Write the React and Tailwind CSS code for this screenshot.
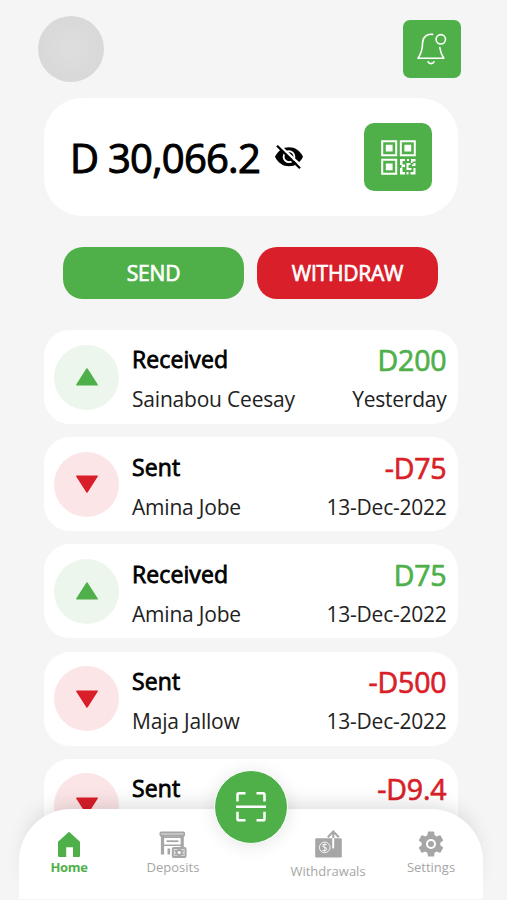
import React from 'react'

const transactions = [
    { id: 1, type: 'Received', name: 'Sainabou Ceesay', amount: 'D200', date: 'Yesterday' },
    { id: 2, type: 'Sent', name: 'Amina Jobe', amount: '-D75', date: '13-Dec-2022' },
    { id: 3, type: 'Received', name: 'Amina Jobe', amount: 'D75', date: '13-Dec-2022' },
    { id: 4, type: 'Sent', name: 'Maja Jallow', amount: '-D500', date: '13-Dec-2022' },
    { id: 5, type: 'Sent', name: 'Maja Jallow', amount: '-D9.4', date: '13-Dec-2022' },
]

const BellIcon = () => (
    <svg width="30" height="34" viewBox="0 0 30 34" fill="none" stroke="white" strokeWidth="1.6" strokeLinecap="round" strokeLinejoin="round">
        <path d="M15.6 2.4C10 1.4 5.8 5 5.6 10.5C5.5 17 4.8 21 1 26.3H26.8C24.4 22.5 23.2 19.5 22.8 15.5" />
        <circle cx="23.8" cy="7.3" r="4.7" />
        <path d="M11 29.8C12 32.2 16 32.2 17 29.8" />
    </svg>
)

const HiddenIcon = () => (
    <svg width="30" height="26" viewBox="0 0 30 26" fill="none">
        <path d="M1 12.7C4 6.5 9 3.2 15 3.2S26 6.5 29 12.7C26 18.9 21 22.2 15 22.2S4 18.9 1 12.7Z" fill="black" />
        <circle cx="15" cy="12.7" r="5.4" stroke="white" strokeWidth="1.9" />
        <circle cx="15" cy="12.7" r="3.3" fill="black" />
        <path d="M4.5 0.5L28 22.5" stroke="white" strokeWidth="2.4" />
        <path d="M3 1.8L26 24.2" stroke="black" strokeWidth="2.3" />
    </svg>
)

const QrIcon = () => (
    <svg width="35" height="35" viewBox="0 0 35 35" fill="none">
        <g stroke="white" strokeWidth="2">
            <path d="M1.2 1.2H15.2V15.2H1.2ZM19.8 1.2H33.8V15.2H19.8ZM1.2 19.8H15.2V33.8H1.2Z" />
        </g>
        <path d="M4.8 4.8H11.6V11.6H4.8ZM23.4 4.8H30.2V11.6H23.4ZM4.8 23.4H11.6V30.2H4.8Z" fill="white" />
        <path d="M19 19H24V21H21.5V24.5H24V27H21.5V32H24V34.5H19V28H20.5V25H19ZM26 19H28V21H26ZM30 19H34.5V21.5H31.5V23H30ZM25.5 23H29.5V25H27.5V28H30.5V30H25.5ZM32.5 23H34.5V26H31V24.5H32.5ZM32.5 28H34.5V34.5H29.5V32H32.5ZM25.5 32H27.5V34.5H25.5Z" fill="white" />
    </svg>
)

const ScanIcon = () => (
    <svg width="32" height="32" viewBox="0 0 32 32" fill="none" stroke="white" strokeWidth="2.5" strokeLinejoin="round">
        <path d="M2.5 10.5V3.5Q2.5 2.2 3.8 2.2H10.5M21.5 2.2H28.2Q29.5 2.2 29.5 3.5V10.5M29.5 20.8V28Q29.5 29.3 28.2 29.3H21.5M10.5 29.3H3.8Q2.5 29.3 2.5 28V20.8M1 15.7H31" />
    </svg>
)

const HomeIcon = () => (
    <svg width="24" height="27" viewBox="0 0 24 27" fill="#4fb04a">
        <path d="M12 0.8L23 10.8V24.8Q23 26 21.8 26H16V16.2H9.2V26H2.2Q1 26 1 24.8V10.8Z" />
    </svg>
)

const DepositIcon = () => (
    <svg width="28" height="27" viewBox="0 0 28 27" fill="none" stroke="#a6a6a6">
        <rect x="1.3" y="1.3" width="24" height="3.6" rx="1" strokeWidth="1.6" fill="#c4c4c4" />
        <path d="M3.5 5V23.5M23.2 5V16.5" strokeWidth="3.2" />
        <path d="M5 6.3H23M5 14.2H23" strokeWidth="1.6" />
        <path d="M7.5 10.2H19.5" strokeWidth="1.8" />
        <path d="M9.8 17.5V23.5" strokeWidth="2.6" />
        <rect x="13.8" y="17" width="12.8" height="9" rx="1" strokeWidth="1.9" fill="#dedede" />
        <circle cx="20.2" cy="21.5" r="2.6" strokeWidth="2" fill="white" />
        <path d="M16.3 19V20.4M24.1 19V20.4M16.3 22.8V24.2M24.1 22.8V24.2" strokeWidth="1.4" />
    </svg>
)

const WithdrawIcon = () => (
    <svg width="27" height="28" viewBox="0 0 27 28" fill="none">
        <rect x="0.2" y="8.2" width="26.6" height="19.4" rx="1.4" fill="#a6a6a6" />
        <path d="M18.3 18V3M12.8 7.2L18.3 1.5L23.8 7.2" stroke="#a6a6a6" strokeWidth="2" />
        <path d="M18.2 8V18.4" stroke="white" strokeWidth="2" />
        <circle cx="9.7" cy="17.4" r="5.3" stroke="white" strokeWidth="0.9" />
        <text x="9.7" y="20.9" fill="white" fontSize="10" textAnchor="middle" fontFamily="Open Sans">$</text>
    </svg>
)

const SettingsIcon = () => (
    <svg width="26" height="26" viewBox="2 2 20 20" fill="#a6a6a6">
        <path d="M19.14 12.94c.04-.3.06-.61.06-.94 0-.32-.02-.64-.07-.94l2.03-1.58c.18-.14.23-.41.12-.61l-1.92-3.32c-.12-.22-.37-.29-.59-.22l-2.39.96c-.5-.38-1.03-.7-1.62-.94l-.36-2.54c-.04-.24-.24-.41-.48-.41h-3.84c-.24 0-.43.17-.47.41l-.36 2.54c-.59.24-1.13.57-1.62.94l-2.39-.96c-.22-.08-.47 0-.59.22L2.74 8.87c-.12.21-.08.47.12.61l2.03 1.58c-.05.3-.09.63-.09.94s.02.64.07.94l-2.03 1.58c-.18.14-.23.41-.12.61l1.92 3.32c.12.22.37.29.59.22l2.39-.96c.5.38 1.03.7 1.62.94l.36 2.54c.05.24.24.41.48.41h3.84c.24 0 .44-.17.47-.41l.36-2.54c.59-.24 1.13-.56 1.62-.94l2.39.96c.22.08.47 0 .59-.22l1.92-3.32c.12-.22.07-.47-.12-.61l-2.01-1.58z" />
        <circle cx="12" cy="12" r="3.1" fill="#a6a6a6" stroke="white" strokeWidth="1.5" />
    </svg>
)

const TransactionCard = ({ type, name, amount, date }) => {
    const received = type === 'Received'

    return (
        <div className="flex h-[94px] shrink-0 items-start rounded-[26px] bg-white pl-[10px] pr-[11.5px]">
            <div className={`mt-[14.5px] flex size-[65px] shrink-0 items-center justify-center rounded-full ${received ? 'bg-[#edf6ed]' : 'bg-[#fce5e7]'}`}>
                <svg width="22" height="18" viewBox="0 0 22 18" strokeWidth="1.4" strokeLinejoin="round">
                    {received
                        ? <path d="M11 1L21.2 16.8H0.8Z" fill="#4fb04a" stroke="#4fb04a" />
                        : <path d="M11 17L21.2 1.2H0.8Z" fill="#d91f29" stroke="#d91f29" />}
                </svg>
            </div>
            <div className="ml-[13px] flex flex-1 flex-col pt-[13.4px]">
                <span className="text-[23px] leading-[32px] tracking-[0.1px] text-black [-webkit-text-stroke:0.8px_black]">{type}</span>
                <span className="mt-[9px] text-[21px] leading-[30px] tracking-[-0.2px] text-[#222]">{name}</span>
            </div>
            <div className="flex flex-col items-end pt-[13.4px]">
                <span className={`text-[28.5px] leading-[35px] tracking-[-0.15px] ${received ? 'text-[#4fb04a] [-webkit-text-stroke:0.7px_#4fb04a]' : 'text-[#d91f29] [-webkit-text-stroke:0.7px_#d91f29]'}`}>{amount}</span>
                <span className="mt-[6px] text-[21px] leading-[30px] tracking-[-0.25px] text-[#222]">{date}</span>
            </div>
        </div>
    )
}

const NavItem = ({ label, active, className, children }) => (
    <button className={`flex flex-col items-center text-[13px] leading-[18px] ${active ? 'font-bold tracking-[-0.3px] text-[#4fb04a]' : 'text-[#a6a6a6]'} ${className}`}>
        {children}
        <span>{label}</span>
    </button>
)

const App = () => {
    return (
        <div className="relative flex h-[900px] w-[507px] flex-col overflow-hidden bg-[#f5f5f5] font-['Open_Sans',sans-serif]">
            {/* Header */}
            <div className="flex justify-between pl-[38px] pr-[46px] pt-4">
                <div className="size-[66px] rounded-full bg-radial from-[#dedede] to-[#d6d6d6]" />
                <button className="mt-1 flex size-[58px] items-center justify-center rounded-[7px] bg-[#4fb04a]">
                    <BellIcon />
                </button>
            </div>

            {/* Balance */}
            <div className="ml-[44px] mt-4 flex h-[118px] w-[414px] shrink-0 items-center rounded-[38px] bg-white pl-[26px] pr-[26px]">
                <span className="pt-px text-[40px] leading-[54px] tracking-[-0.75px] text-black [-webkit-text-stroke:1px_black]">D 30,066.2</span>
                <span className="ml-[14px]"><HiddenIcon /></span>
                <button className="ml-auto flex size-[68px] items-center justify-center rounded-[10px] bg-[#4fb04a]">
                    <QrIcon />
                </button>
            </div>

            <div className="ml-[63px] mt-[31px] flex gap-[13px] text-[21px] tracking-[-0.2px] text-white [-webkit-text-stroke:0.7px_white]">
                <button className="h-[52px] w-[181px] rounded-[20px] bg-[#4fb04a] pt-[2px]">SEND</button>
                <button className="h-[52px] w-[181px] rounded-[20px] bg-[#d91f29] pt-[2px]">WITHDRAW</button>
            </div>

            {/* Transactions */}
            <div className="ml-[44px] mt-[31px] flex w-[414px] flex-col gap-[13.2px]">
                {transactions.map((item) => (
                    <TransactionCard key={item.id} {...item} />
                ))}
            </div>

            {/* Bottom nav */}
            <div className="absolute bottom-[1px] left-[19px] flex h-[90px] w-[464px] items-start rounded-t-[52px] bg-white shadow-[0_-12px_22px_-10px_rgba(0,0,0,0.16)]">
                <NavItem label="Home" active className="ml-[19px] w-[62px] pt-[22px]"><HomeIcon /></NavItem>
                <NavItem label="Deposits" className="ml-[32px] w-[82px] pt-[22px]"><DepositIcon /></NavItem>
                <NavItem label="Withdrawals" className="ml-[68px] w-[92px] gap-[4px] pt-[21px]"><WithdrawIcon /></NavItem>
                <NavItem label="Settings" className="ml-[26px] w-[62px] gap-[1px] pt-[22px]"><SettingsIcon /></NavItem>
            </div>
            <button className="absolute left-[214px] top-[770px] flex size-[74px] items-center justify-center rounded-full border border-white bg-[#4fb04a] shadow-[0_2px_18px_rgba(0,0,0,0.1)]">
                <ScanIcon />
            </button>
        </div>
    )
}

export default App
